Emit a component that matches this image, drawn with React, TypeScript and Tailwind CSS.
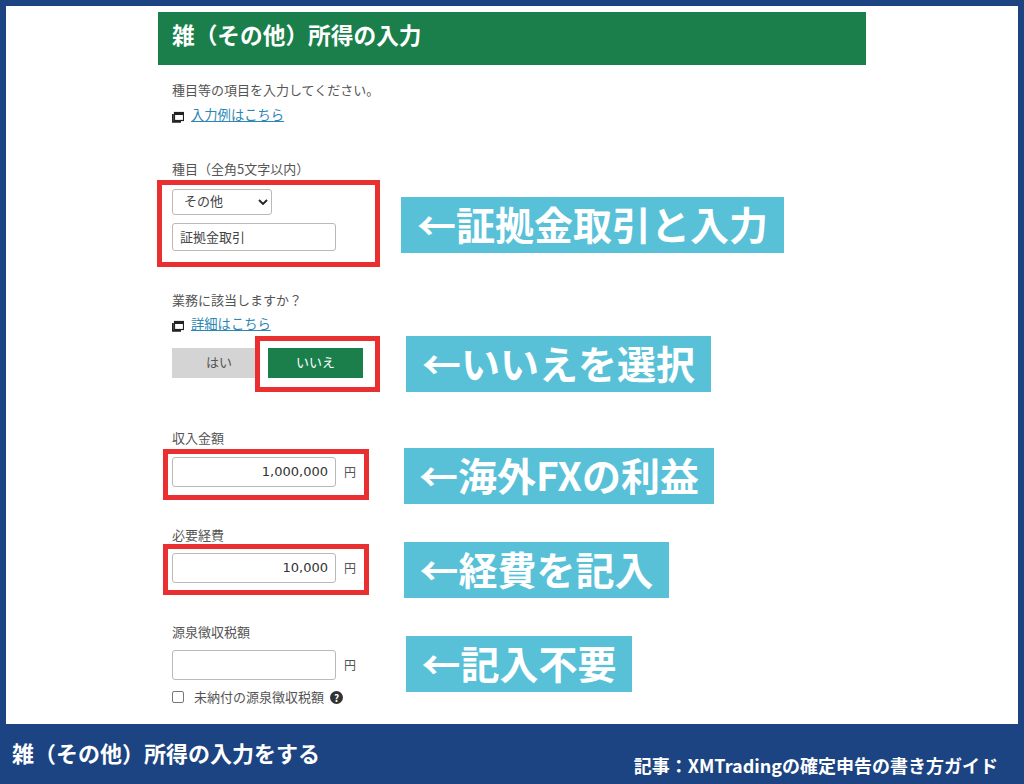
const jp = "font-['Noto_Sans_CJK_JP',sans-serif]"

function LinkRow({ label }: { label: string }) {
  return (
    <div className="flex items-center h-[18px] ml-[14px]">
      <svg width="12" height="12" viewBox="0 0 12 12" className="mr-[7px] mt-[3px]">
        <rect x="2.5" y="1.5" width="9" height="8" fill="#fff" stroke="#222" strokeWidth="1.2" />
        <rect x="2.5" y="1" width="9" height="3" fill="#222" />
        <path d="M0.9 3v7.8H9" fill="none" stroke="#222" strokeWidth="1.8" />
      </svg>
      <a className="text-[13.3px] leading-[18px] text-[#2d87b5] underline">{label}</a>
    </div>
  )
}

function AmountInput({ value }: { value?: string }) {
  return (
    <div className="flex items-center">
      <div className="w-[164px] h-[30px] border border-[#b9b9b9] rounded-[3px] bg-white flex items-center justify-end pr-[7px] text-[13px] text-[#333] font-['DejaVu_Sans',sans-serif]">
        {value}
      </div>
      <span className="ml-[8px] text-[12px] text-[#555]">円</span>
    </div>
  )
}

function Label({ text, className }: { text: string; className: string }) {
  return <p className={`ml-[14px] leading-[18px] ${className}`}>{text}</p>
}

function Callout({ text, className }: { text: string; className: string }) {
  return (
    <div className={`h-[56px] -mb-[8px] pb-[4px] bg-[#58c1d8] flex items-center justify-center text-white font-bold text-[39px] leading-none whitespace-nowrap ${className}`}>
      {text}
    </div>
  )
}

export default function App() {
  return (
    <div className={`w-[1024px] h-[784px] bg-[#1c4482] flex flex-col overflow-hidden ${jp}`}>
      <div className="mx-[6px] mt-[6px] h-[718px] bg-white pl-[152px] pt-[6px]">
        <div className="w-[708px] h-[53px] bg-[#1a7f4b] flex items-center pl-[14px] text-white font-bold text-[22.7px] pb-[7px]">
          雑（その他）所得の入力
        </div>

        <div className="text-[13px] text-[#555]">
          <Label text="種目等の項目を入力してください。" className="mt-[16px]" />
          <div className="mt-[7px]">
            <LinkRow label="入力例はこちら" />
          </div>

          <Label text="種目（全角5文字以内）" className="mt-[36px]" />
          <div className="mt-[2px] -ml-[1px] flex items-start">
            <div className="w-[223px] border-[5px] border-[#ea2f30] pl-[10px] pt-[4px] pb-[11px]">
              <div className="w-[100px] h-[26px] border border-[#b9b9b9] rounded-[3px] flex items-center justify-between pl-[11px] pr-[3px] text-[#444] pb-[2px]">
                その他
                <svg width="10" height="6" viewBox="0 0 10 6" className="mt-[2px]">
                  <path d="M1 1l4 4 4-4" fill="none" stroke="#222" strokeWidth="1.8" />
                </svg>
              </div>
              <div className="mt-[8px] w-[164px] h-[28px] border border-[#b9b9b9] rounded-[3px] flex items-center pl-[7px] text-[#444] text-[13px]">
                証拠金取引
              </div>
            </div>
            <Callout text="←証拠金取引と入力" className="ml-[21px] mt-[17px] w-[383px]" />
          </div>

          <Label text="業務に該当しますか？" className="mt-[24px]" />
          <div className="mt-[6px]">
            <LinkRow label="詳細はこちら" />
          </div>
          <div className="mt-[3px] ml-[14px] flex items-start">
            <div className="mt-[12px] w-[83px] h-[30px] pl-[11px] pb-[2px] bg-[#d4d4d4] flex items-center justify-center text-[13px] text-[#555]">はい</div>
            <div className="w-[125px] h-[56px] border-[5px] border-[#ea2f30] pl-[8px] pt-[7px]">
              <div className="w-[95px] h-[30px] pb-[2px] bg-[#1a7f4b] flex items-center justify-center text-[13px] text-white">いいえ</div>
            </div>
            <Callout text="←いいえを選択" className="ml-[26px] w-[305px]" />
          </div>

          <Label text="収入金額" className="mt-[37px]" />
          <div className="mt-[2px] ml-[5px] flex items-start">
            <div className="w-[206px] h-[51px] border-[5px] border-[#ea2f30] pl-[4px] pt-[3px]">
              <AmountInput value="1,000,000" />
            </div>
            <Callout text="←海外FXの利益" className="ml-[35px] -mt-[1px] w-[310px]" />
          </div>

          <Label text="必要経費" className="mt-[26px]" />
          <div className="ml-[5px] flex items-start">
            <div className="w-[206px] h-[51px] border-[5px] border-[#ea2f30] pl-[4px] pt-[4px]">
              <AmountInput value="10,000" />
            </div>
            <Callout text="←経費を記入" className="ml-[35px] -mt-[2px] w-[265px]" />
          </div>

          <div className="mt-[28px] flex items-start">
            <div className="w-[246px]">
              <Label text="源泉徴収税額" className="" />
              <div className="mt-[9px] ml-[14px]">
                <AmountInput />
              </div>
              <div className="mt-[8px] ml-[14px] flex items-center text-[13px] h-[18px]">
                <span className="w-[12px] h-[12px] border border-[#777] rounded-[2px] bg-white" />
                <span className="ml-[10px] whitespace-nowrap">未納付の源泉徴収税額</span>
                <span className="ml-[6px] w-[13px] h-[13px] shrink-0 rounded-full bg-[#333] text-white text-[10px] font-bold flex items-center justify-center">?</span>
              </div>
            </div>
            <Callout text="←記入不要" className="mt-[13px] ml-[2px] w-[226px]" />
          </div>
        </div>
      </div>

      <div className="flex-1 text-white font-bold pl-[12px] pr-[26px] flex justify-between">
        <p className="pt-[14px] text-[22px] leading-[28px]">雑（その他）所得の入力をする</p>
        <p className="pt-[29px] text-[18px] leading-[24px]">記事：XMTradingの確定申告の書き方ガイド</p>
      </div>
    </div>
  )
}
